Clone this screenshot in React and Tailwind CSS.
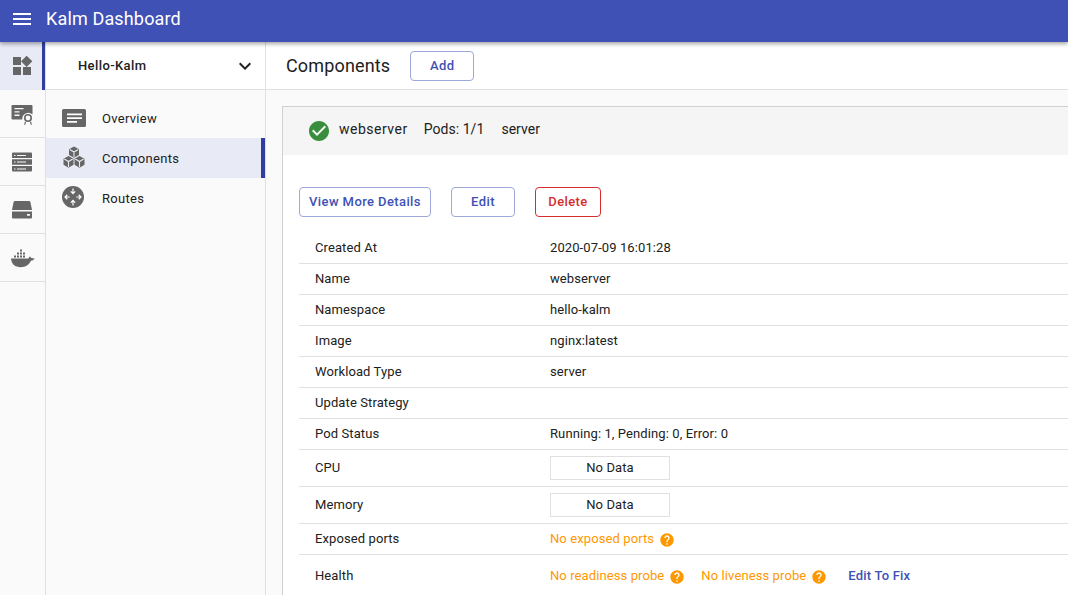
const Menu = () => (
  <svg width="24" height="24" viewBox="0 0 24 24" fill="#fff">
    <path d="M3 18h18v-2H3v2zm0-5h18v-2H3v2zm0-7v2h18V6H3z" />
  </svg>
);

const Widgets = () => (
  <svg width="24" height="24" viewBox="0 0 24 24" fill="#666">
    <path d="M13 13v8h8v-8h-8zM3 21h8v-8H3v8zM3 3v8h8V3H3zm13.66-1.31L11 7.34 16.66 13l5.66-5.66-5.66-5.65z" />
  </svg>
);

const Cert = () => (
  <svg width="24" height="24" viewBox="0 0 24 24" fill="#666">
    <path d="M2.500 3h19a1 1 0 0 1 1 1v8.600a6 6 0 0 0-10.200 4.900H2.500a1 1 0 0 1-1-1V4a1 1 0 0 1 1-1z" />
    <path d="M4.500 6h9v1.300h-9zM4.500 9.300h5v1.300h-5zM4.500 12.600h5v1.300h-5z" fill="#fafafa" />
    <path d="M18 12a4 4 0 1 1 0 8 4 4 0 0 1 0-8zm0 1.600a2.400 2.400 0 1 0 0 4.800 2.400 2.400 0 0 0 0-4.800z" />
    <path d="M14.800 19.500l-.6 3.500 1.200-.5.600-2.300zM21.200 19.500l.6 3.500-1.200-.5-.6-2.300z" />
  </svg>
);

const Nodes = () => (
  <svg width="24" height="24" viewBox="0 0 24 24" fill="#666">
    <path d="M2 3.500a1 1 0 0 1 1-1h18a1 1 0 0 1 1 1V8H2zM2 9.300h20v5.400H2zM2 16h20v4.500a1 1 0 0 1-1 1H3a1 1 0 0 1-1-1z" />
    <path d="M4 5h1.500v1H4zM7 5h9v1H7zM4 11.500h1.500v1H4zM7 11.500h9v1H7zM4 18.500h1.500v1H4zM7 18.500h9v1H7z" fill="#fafafa" />
  </svg>
);

const Disk = () => (
  <svg width="24" height="24" viewBox="0 0 24 24" fill="#666">
    <path d="M5 3h14a1.500 1.500 0 0 1 1.400 1l1.600 8H2l1.600-8A1.500 1.500 0 0 1 5 3z" />
    <path d="M2 13.500h20v6a1 1 0 0 1-1 1H3a1 1 0 0 1-1-1zM17 16v1.800h3V16z" fillRule="evenodd" />
  </svg>
);

const Docker = () => (
  <svg width="26" height="24" viewBox="0 0 26 24" fill="#666">
    <path d="M1 12.500h17.500c.4-1.200 1-1.900 1.800-2 .3 1 .9 1.600 1.900 1.700.9 0 1.600 0 2.300.3-.8 1.500-2 2.200-3.600 2.300-1.800 4.200-5.300 6.400-10.200 6.400C5 21.200 1.500 18 1 12.500z" />
    <path d="M4 9.500h2v2H4zM7 9.500h2v2H7zM10 9.500h2v2h-2zM13 9.500h2v2h-2zM7 6.500h2v2H7zM10 6.500h2v2h-2zM13 6.500h2v2h-2zM10 3.500h2v2h-2z" />
  </svg>
);

const Overview = () => (
  <svg width="24" height="18" viewBox="0 0 24 18" fill="#666">
    <path d="M1.500 0h21A1.500 1.500 0 0 1 24 1.500v15a1.500 1.500 0 0 1-1.500 1.500h-21A1.500 1.500 0 0 1 0 16.500v-15A1.500 1.500 0 0 1 1.500 0z" />
    <path d="M5 4.500h15v1.800H5zM5 8.200h15V10H5zM5 12h10v1.800H5z" fill="#fff" />
  </svg>
);

const Cubes = () => (
  <svg width="24" height="24" viewBox="0 0 24 24" fill="#666">
    <path d="M12 0.500l5 2.800v5.600l-5 2.800-5-2.800V3.300z" />
    <path d="M6.500 10l5 2.800v6l-5 2.900-5-2.900v-6z" />
    <path d="M17.500 10l5 2.800v6l-5 2.900-5-2.900v-6z" />
    <path d="M7.800 3.600L12 6l4.200-2.400M12 6v5M2.300 13.100l4.200 2.400 4.200-2.400M6.500 15.500v5.500M13.300 13.100l4.200 2.400 4.200-2.400M17.500 15.500v5.500" fill="none" stroke="#e8eaf6" strokeWidth="1.100" />
  </svg>
);

const RouteIcon = () => (
  <svg width="22" height="22" viewBox="0 0 22 22">
    <circle cx="11" cy="11" r="11" fill="#666" />
    <path d="M11 2.500v5M8.800 5.400L11 7.600l2.200-2.200M11 19.500v-5M8.800 16.600L11 14.400l2.200 2.200M2.500 11h5.200M5.300 8.800L3 11l2.300 2.200M19.500 11h-5.200M16.700 8.800L19 11l-2.300 2.200" fill="none" stroke="#fff" strokeWidth="1.200" />
  </svg>
);

const Check = () => (
  <svg width="24" height="24" viewBox="0 0 24 24" fill="#388e3c">
    <path d="M12 2C6.480 2 2 6.480 2 12s4.480 10 10 10 10-4.480 10-10S17.520 2 12 2zm-2 15l-5-5 1.410-1.410L10 14.170l7.590-7.590L19 8l-9 9z" />
  </svg>
);

const Help = () => (
  <svg width="16" height="16" viewBox="0 0 24 24" fill="#ff9800">
    <path d="M12 2C6.480 2 2 6.480 2 12s4.480 10 10 10 10-4.480 10-10S17.520 2 12 2zm1 17h-2v-2h2v2zm2.070-7.750l-.9.920C13.450 12.900 13 13.500 13 15h-2v-.5c0-1.100.45-2.100 1.170-2.830l1.240-1.260c.37-.36.590-.86.590-1.410 0-1.100-.9-2-2-2s-2 .9-2 2H8c0-2.210 1.790-4 4-4s4 1.790 4 4c0 .88-.36 1.680-.93 2.250z" />
  </svg>
);

const Chevron = () => (
  <svg width="24" height="24" viewBox="0 0 24 24" fill="#212121">
    <path d="M7.410 8.590L12 13.170l4.590-4.580L18 10l-6 6-6-6 1.410-1.410z" />
  </svg>
);

const railIcons = [Cert, Nodes, Disk, Docker];

const rows = [
  { label: "Created At", value: "2020-07-09 16:01:28" },
  { label: "Name", value: "webserver" },
  { label: "Namespace", value: "hello-kalm" },
  { label: "Image", value: "nginx:latest" },
  { label: "Workload Type", value: "server" },
  { label: "Update Strategy", value: "" },
  { label: "Pod Status", value: "Running: 1, Pending: 0, Error: 0" },
];

function Row({ label, height, children }) {
  return (
    <div className={`flex items-center border-b border-[#e0e0e0] pl-4 ${height}`}>
      <div className="w-[235px] shrink-0">{label}</div>
      <div className="flex items-center">{children}</div>
    </div>
  );
}

function NoData() {
  return <div className="w-[120px] h-6 border border-[#e0e0e0] flex items-center justify-center">No Data</div>;
}

function Warn({ text, className }) {
  return (
    <span className={`flex items-center text-[#ff9800] ${className}`}>
      {text}
      <span className="ml-[5px] mt-[2px] flex"><Help /></span>
    </span>
  );
}

function OutlineButton({ children, className }) {
  return (
    <button className={`h-[30px] rounded border border-[#9fa8da] text-[#3f51b5] font-medium text-[13px] tracking-[0.4px] ${className}`}>
      {children}
    </button>
  );
}

export default function App() {
  return (
    <div className="w-[1068px] h-[595px] overflow-hidden flex flex-col bg-[#fafafa] text-[13px] tracking-[0.1px] text-[#212121] font-['Roboto',sans-serif]">
      {/* Top bar */}
      <header className="h-[42px] shrink-0 bg-[#3f51b5] flex items-center pl-2.5 pb-[5px] gap-3 text-white text-lg shadow-[0_2px_4px_rgba(0,0,0,0.35)] z-10 relative">
        <Menu />
        <span className="tracking-[0.15px]">Kalm Dashboard</span>
      </header>

      <div className="flex flex-1 min-h-0">
        {/* Icon rail */}
        <aside className="w-[46px] shrink-0 border-r border-[#e0e0e0]">
          <div className="h-12 bg-[#e8eaf6] border-r-[3px] border-[#303f9f] flex items-center pl-2.5 w-[45px]">
            <Widgets />
          </div>
          {railIcons.map((Icon, i) => (
            <div key={i} className="h-12 border-b border-[#e0e0e0] flex items-center pl-2.5">
              <Icon />
            </div>
          ))}
        </aside>

        {/* Application sidebar */}
        <aside className="w-[220px] shrink-0 border-r border-[#e0e0e0]">
          <div className="h-12 bg-white border-b border-[#e0e0e0] flex items-center justify-between pl-8 pr-2 font-medium tracking-[0.4px]">
            <span>Hello-Kalm</span>
            <Chevron />
          </div>
          <nav className="pt-2 tracking-[0.3px]">
            <div className="h-10 flex items-center">
              <div className="w-14 pl-4 flex"><Overview /></div>
              <span className="mt-0.5">Overview</span>
            </div>
            <div className="h-10 flex items-center bg-[#e8eaf6] border-r-4 border-[#303f9f]">
              <div className="w-14 pl-4 flex"><Cubes /></div>
              <span className="mt-0.5">Components</span>
            </div>
            <div className="h-10 flex items-center">
              <div className="w-14 pl-4 flex -mt-[2px]"><RouteIcon /></div>
              <span className="mt-0.5">Routes</span>
            </div>
          </nav>
        </aside>

        {/* Main */}
        <main className="flex-1 min-w-0">
          <div className="h-12 bg-white border-b border-[#e0e0e0] flex items-center pl-5 gap-5">
            <h1 className="text-lg tracking-[0.15px]">Components</h1>
            <OutlineButton className="w-16">Add</OutlineButton>
          </div>

          <section className="mt-4 ml-4 w-[900px] border border-[#d0d0d0] bg-white">
            <div className="h-12 bg-[#f5f5f5] flex items-center pl-[24px] text-sm tracking-normal">
              <Check />
              <span className="ml-2 mb-1 tracking-[0.5px]">webserver</span>
              <span className="ml-4 mb-1 tracking-[0.05px]">Pods: 1/1</span>
              <span className="ml-[17px] mb-1 tracking-[0.05px]">server</span>
            </div>

            <div className="pt-8 pl-4">
              <div className="flex gap-5">
                <OutlineButton className="w-[132px]">View More Details</OutlineButton>
                <OutlineButton className="w-16">Edit</OutlineButton>
                <OutlineButton className="w-[66px] border-[#d32f2f]! text-[#d32f2f]!">Delete</OutlineButton>
              </div>

              <div className="mt-4">
                {rows.map((r) => (
                  <Row key={r.label} label={r.label} height="h-[31px]">{r.value}</Row>
                ))}
                <Row label="CPU" height="h-[37px]"><NoData /></Row>
                <Row label="Memory" height="h-[37px]"><NoData /></Row>
                <Row label="Exposed ports" height="h-[31px]"><Warn text="No exposed ports" /></Row>
                <Row label="Health" height="h-[43px]">
                  <Warn text="No readiness probe" />
                  <Warn text="No liveness probe" className="ml-4" />
                  <span className="ml-[21px] text-[#3f51b5] font-medium tracking-[0.2px]">Edit To Fix</span>
                </Row>
              </div>
            </div>
          </section>
        </main>
      </div>
    </div>
  );
}
